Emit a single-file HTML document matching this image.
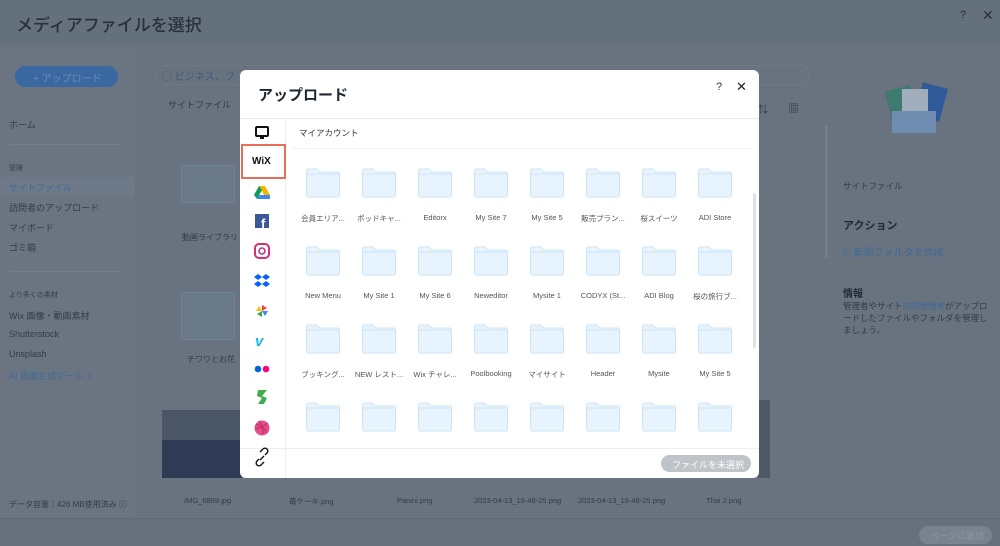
<!DOCTYPE html>
<html><head><meta charset="utf-8">
<style>
*{margin:0;padding:0;box-sizing:border-box}
body{width:1000px;height:546px;overflow:hidden;background:#68737f;font-family:"Liberation Sans","Noto Sans CJK JP",sans-serif;position:relative;color:#2b3440}
.a{position:absolute}
.t{position:absolute;white-space:nowrap}
.bgtext{color:#323c48}
.fold{position:absolute;width:37px;height:31px}
.lbl{position:absolute;width:56px;text-align:center;font-size:7.5px;color:#555;white-space:nowrap}
</style></head><body>
<div class="a" style="left:0;top:0;width:1000px;height:45px;background:#64707c"></div>
<div class="a" style="left:0;top:45px;width:135px;height:475px;background:#6a7581"></div>
<div class="a" style="left:0;top:518px;width:1000px;height:28px;background:#66717d;border-top:1px solid #5f6a75"></div>
<div class="t" style="left:16px;top:11px;font-size:17px;color:#27303b;font-weight:500">メディアファイルを選択</div>
<div class="t" style="left:960px;top:9px;font-size:11px;color:#27303b">?</div>
<div class="t" style="left:982px;top:7px;font-size:14px;color:#27303b">✕</div>
<div class="a" style="left:15px;top:66px;width:103px;height:21px;border-radius:11px;background:#3a68a0"></div>
<div class="t" style="left:33px;top:70px;font-size:10px;color:#6b8db6">+ アップロード</div>
<div class="a" style="left:155px;top:65px;width:655px;height:20px;border-radius:10px;border:1px solid #6f7a86"></div>
<div class="t" style="left:162px;top:68px;font-size:10px;color:#3d5a7a">◯ ビジネス、フ</div>
<div class="t bgtext" style="left:168px;top:98px;font-size:9px">サイトファイル</div>
<div class="t bgtext" style="left:9px;top:118px;font-size:9px">ホーム</div>
<div class="a" style="left:9px;top:144px;width:114px;height:1px;background:#737e8a"></div>
<div class="t bgtext" style="left:9px;top:163px;font-size:7px">管理</div>
<div class="a" style="left:0;top:177px;width:135px;height:20px;background:#6d7987"></div>
<div class="t" style="left:9px;top:181px;font-size:9px;color:#3d6a98">サイトファイル</div>
<div class="t bgtext" style="left:9px;top:201px;font-size:9px">訪問者のアップロード</div>
<div class="t bgtext" style="left:9px;top:221px;font-size:9px">マイボード</div>
<div class="t bgtext" style="left:9px;top:241px;font-size:9px">ゴミ箱</div>
<div class="a" style="left:9px;top:271px;width:114px;height:1px;background:#737e8a"></div>
<div class="t bgtext" style="left:9px;top:290px;font-size:7px">より多くの素材</div>
<div class="t bgtext" style="left:9px;top:309px;font-size:9px">Wix 画像・動画素材</div>
<div class="t bgtext" style="left:9px;top:329px;font-size:9px">Shutterstock</div>
<div class="t bgtext" style="left:9px;top:349px;font-size:9px">Unsplash</div>
<div class="t" style="left:9px;top:369px;font-size:9px;color:#3d6a98">AI 画像生成ツール ✧</div>
<div class="t bgtext" style="left:9px;top:499px;font-size:8px">データ容量：426 MB使用済み ⓘ</div>
<div class="a" style="left:181px;top:165px;width:54px;height:38px;border:1px solid #71839a;border-radius:3px;background:#6a7988"></div>
<div class="t bgtext" style="left:182px;top:232px;font-size:8px">動画ライブラリ</div>
<div class="a" style="left:181px;top:292px;width:54px;height:48px;border:1px solid #71839a;border-radius:3px;background:#6a7988"></div>
<div class="t bgtext" style="left:187px;top:354px;font-size:8px">チワワとお花</div>
<div class="a" style="left:162px;top:410px;width:80px;height:68px;background:#2f3a55"></div>
<div class="a" style="left:162px;top:410px;width:80px;height:30px;background:#4a5566"></div>
<div class="t bgtext" style="left:184px;top:496px;font-size:7.5px">IMG_6859.jpg</div>
<div class="t bgtext" style="left:289px;top:496px;font-size:7.5px">苺ケーキ.png</div>
<div class="t bgtext" style="left:397px;top:496px;font-size:7.5px">Panini.png</div>
<div class="t bgtext" style="left:474px;top:496px;font-size:7.5px">2023-04-13_16-48-25.png</div>
<div class="t bgtext" style="left:578px;top:496px;font-size:7.5px">2023-04-13_16-48-25.png</div>
<div class="t bgtext" style="left:706px;top:496px;font-size:7.5px">Thai 2.png</div>
<div class="a" style="left:758px;top:400px;width:12px;height:78px;background:#4d5a66"></div>
<div class="t bgtext" style="left:758px;top:101px;font-size:10px">⇅</div>
<div class="t bgtext" style="left:788px;top:100px;font-size:11px">▦</div>
<div class="a" style="left:825px;top:125px;width:3px;height:133px;background:#6f7f90;border-radius:2px"></div>
<div class="a" style="left:888px;top:85px;width:55px;height:48px">
<div class="a" style="left:0;top:3px;width:26px;height:30px;background:#3e7a6e;transform:rotate(-15deg)"></div>
<div class="a" style="left:30px;top:0;width:26px;height:34px;background:#2f5a9a;transform:rotate(15deg)"></div>
<div class="a" style="left:14px;top:4px;width:26px;height:26px;background:#a0adba"></div>
<div class="a" style="left:4px;top:26px;width:44px;height:22px;background:#6f8db0"></div>
</div>
<div class="t bgtext" style="left:843px;top:180px;font-size:8.5px">サイトファイル</div>
<div class="t" style="left:843px;top:217px;font-size:11px;color:#222a35;font-weight:bold">アクション</div>
<div class="t" style="left:843px;top:244px;font-size:10px;color:#3d6a98">⎘ 新規フォルダを作成</div>
<div class="t" style="left:843px;top:285px;font-size:10px;color:#222a35;font-weight:bold">情報</div>
<div class="a bgtext" style="left:843px;top:300px;width:150px;font-size:8.5px;line-height:12px">管理者やサイト<span style="color:#3d6a98">共同管理者</span>がアップロードしたファイルやフォルダを管理しましょう。</div>
<div class="a" style="left:919px;top:526px;width:73px;height:18px;border-radius:9px;background:#78838f"></div>
<div class="t" style="left:930px;top:529px;font-size:9px;color:#8d98a3">ページに追加</div>

<div class="a" style="left:240px;top:70px;width:519px;height:408px;background:#fff;border-radius:6px;overflow:hidden">
<div class="t" style="left:18px;top:14px;font-size:15px;font-weight:bold;color:#1f2630">アップロード</div>
<div class="t" style="left:476px;top:11px;font-size:11px;color:#333">?</div>
<div class="t" style="left:496px;top:9px;font-size:13px;color:#222">✕</div>
<div class="a" style="left:0;top:48px;width:519px;height:1px;background:#e6e9ec"></div>
<div class="a" style="left:45px;top:49px;width:1px;height:359px;background:#eceef0"></div>
<div class="t" style="left:59px;top:57px;font-size:8.5px;color:#333">マイアカウント</div>
<div class="a" style="left:53px;top:78px;width:460px;height:1px;background:#f0f1f3"></div>
<div class="a" style="left:0;top:378px;width:519px;height:1px;background:#eceef0"></div>
<div class="a" style="left:513px;top:123px;width:3px;height:155px;background:#dde1e5;border-radius:2px"></div>
<div class="a" style="left:421px;top:385px;width:90px;height:17px;border-radius:9px;background:#bfc4c9"></div>
<div class="t" style="left:432px;top:388px;font-size:9px;color:#fff">ファイルを未選択</div>
<div class="a" style="left:1px;top:74px;width:45px;height:35px;border:2px solid #e86e5a"></div>
<div class="t" style="left:12px;top:86px;font-size:10px;font-weight:bold;color:#111">WiX</div>
</div>
<svg class="a" style="left:250px;top:124px" width="24" height="350" viewBox="0 0 24 350">
 <rect x="6" y="3" width="12" height="9" rx="1" fill="none" stroke="#111" stroke-width="2"/><rect x="10" y="12" width="4" height="3" fill="#111"/>
 <polygon points="9,62 15,62 20,71 14,71" fill="#f4b400"/><polygon points="9,62 4,71 7,75 12,66" fill="#0f9d58"/><polygon points="7,75 20,75 20,71 9,71" fill="#4285f4"/>
 <rect x="5" y="90" width="14" height="14" fill="#3b5998"/><text x="11" y="104" font-size="13" font-weight="bold" fill="#fff" font-family="Liberation Sans">f</text>
 <rect x="5" y="120" width="14" height="14" rx="4" fill="none" stroke="#d6306f" stroke-width="2"/><circle cx="12" cy="127" r="3" fill="none" stroke="#c13584" stroke-width="1.6"/>
 <path d="M8 150l4 3-4 3-4-3zM16 150l4 3-4 3-4-3zM8 157l4 3 4-3 4 3-4 3-4-3-4 3-4-3z" fill="#0061fe"/>
 <path d="M12 187l0-6 5 3z" fill="#ea4335"/><path d="M12 187l6 0-3 5z" fill="#4285f4"/><path d="M12 187l0 6-5-3z" fill="#34a853"/><path d="M12 187l-6 0 3-5z" fill="#fbbc05"/>
 <text x="5" y="222" font-size="15" font-weight="bold" font-style="italic" fill="#1ab7ea" font-family="Liberation Sans">v</text>
 <circle cx="8" cy="245" r="3.3" fill="#0063dc"/><circle cx="16" cy="245" r="3.3" fill="#ff0084"/>
 <path d="M8 266h9l-5 6 5 2-3 6h-6l4-6-5-2z" fill="#3ead4f"/>
 <circle cx="12" cy="304" r="7.5" fill="#ea4c89"/><path d="M6 300c4 1 9 4 11 9M9 297c3 4 4 9 4 13M5 305c4-1 9-3 13-6" stroke="#b8306a" fill="none" stroke-width="1"/>
 <path d="M9 335l-2 2a2.5 2.5 0 0 0 4 4l3-3M15 331l2-2a2.5 2.5 0 0 0-4-4l-3 3M10 336l4-4" fill="none" stroke="#111" stroke-width="1.4"/>
</svg>
<svg width="0" height="0" style="position:absolute"><defs><symbol id="f" viewBox="0 0 37 31"><path d="M1.5 4a2 2 0 0 1 2-2h8l3 3h18a2 2 0 0 1 2 2v21a2 2 0 0 1-2 2h-29a2 2 0 0 1-2-2z" fill="#e8f4fd" stroke="#cde4f6"/><path d="M1.5 7h34" stroke="#cde4f6"/></symbol></defs></svg>
<div id="grid"></div>
<script>
var names=[["会員エリア...","ポッドキャ...","Editorx","My Site 7","My Site 5","販売プラン...","桜スイーツ","ADI Store"],["New Menu","My Site 1","My Site 6","Neweditor","Mysite 1","CODYX (St...","ADI Blog","桜の旅行ブ..."],["ブッキング...","NEW レスト...","Wix チャレ...","Poolbooking","マイサイト","Header","Mysite","My Site 5"],null];
var h="";for(var r=0;r<4;r++)for(var c=0;c<8;c++){var cx=323+56*c,y=167+78*r;h+='<svg class="fold" style="left:'+(cx-18)+'px;top:'+y+'px"><use href="#f"/></svg>';if(names[r])h+='<div class="lbl" style="left:'+(cx-28)+'px;top:'+(y+46)+'px">'+names[r][c]+'</div>';}
document.getElementById("grid").innerHTML=h;
</script>
</body></html>
